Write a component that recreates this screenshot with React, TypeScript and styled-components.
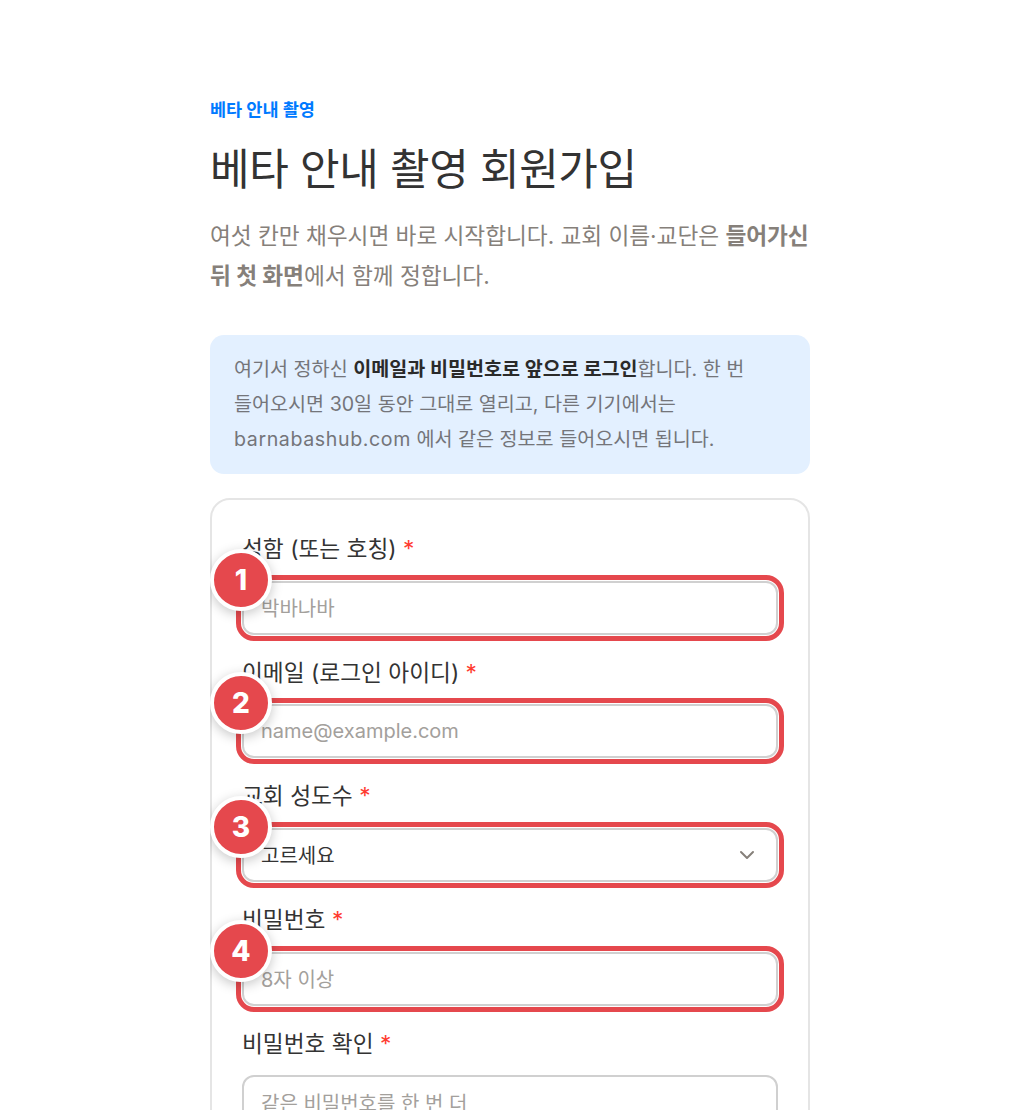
import React from "react";
import styled, { createGlobalStyle } from "styled-components";
import { ChevronDown } from "lucide-react";

const GlobalStyle = createGlobalStyle`
  html, body {
    margin: 0;
    padding: 0;
    height: 100%;
    overflow: hidden;
    background: #fff;
  }
  * {
    box-sizing: border-box;
  }
`;

const Page = styled.div`
  width: 600px;
  height: 1110px;
  overflow: hidden;
  margin: 0 auto;
  padding-top: 97px;
  font-family: Inter, "Noto Sans CJK KR", sans-serif;
  color: #333;
`;

const Eyebrow = styled.div`
  font-size: 17.5px;
  line-height: 26px;
  font-weight: 700;
  color: #007aff;
`;

const Title = styled.h1`
  margin: 20px 0 0;
  font-size: 43px;
  line-height: 52px;
  font-weight: 400;
  letter-spacing: -0.4px;
  color: #333;
`;

const Lead = styled.p`
  margin: 21px 0 0;
  font-size: 22.7px;
  line-height: 40px;
  letter-spacing: -0.05px;
  color: #86807a;
  word-break: keep-all;
  b {
    font-weight: 700;
  }
`;

const Notice = styled.div`
  margin-top: 39px;
  padding: 17px 24px 17px;
  background: #e3f0ff;
  border-radius: 14px;
  font-size: 19.6px;
  line-height: 35px;
  color: #74757a;
  word-break: keep-all;
  b {
    font-weight: 700;
    color: #2a2a2a;
  }
`;

const Domain = styled.span`
  letter-spacing: 0.6px;
`;

const Card = styled.div`
  margin-top: 24px;
  padding: 33px 30px 30px;
  border: 2px solid #e5e5e5;
  border-radius: 20px;
`;

const Field = styled.div`
  position: relative;
  margin-bottom: 22.2px;
`;

const Label = styled.label`
  display: block;
  font-size: 22.7px;
  line-height: 32px;
  color: #333;
  margin-bottom: 15.5px;
`;

const Required = styled.span`
  color: #ff3b30;
`;

const InputBox = styled.div`
  position: relative;
  height: 54px;
  padding: 0 17px;
  display: flex;
  align-items: center;
  justify-content: space-between;
  background: #fff;
  border: 2px solid #d0d0d0;
  border-radius: 12px;
  font-size: 20px;
`;

const Placeholder = styled.span`
  color: #a3a09c;
`;

const Value = styled.span`
  color: #333;
`;

const Chevron = styled(ChevronDown)`
  color: #86807a;
`;

const Ring = styled.div`
  position: absolute;
  inset: -8px;
  border: 5px solid #e5484d;
  border-radius: 18px;
  pointer-events: none;
`;

const Badge = styled.div`
  position: absolute;
  left: -31px;
  top: -31px;
  width: 62px;
  height: 62px;
  border-radius: 50%;
  border: 4px solid #fff;
  background: #e5484d;
  color: #fff;
  display: flex;
  align-items: center;
  justify-content: center;
  font-size: 28px;
  font-weight: 800;
  box-shadow: 0 3px 12px rgba(0, 0, 0, 0.22);
`;

type FieldRowProps = {
  label: string;
  placeholder?: string;
  value?: string;
  mark?: number;
  select?: boolean;
};

const FieldRow = ({ label, placeholder, value, mark, select }: FieldRowProps) => (
  <Field>
    <Label>
      {label} <Required>*</Required>
    </Label>
    <InputBox>
      {value ? <Value>{value}</Value> : <Placeholder>{placeholder}</Placeholder>}
      {select && <Chevron size={24} strokeWidth={2} />}
      {mark && (
        <Ring>
          <Badge>{mark}</Badge>
        </Ring>
      )}
    </InputBox>
  </Field>
);

const App = () => (
  <>
    <GlobalStyle />
    <Page>
      <Eyebrow>베타 안내 촬영</Eyebrow>
      <Title>베타 안내 촬영 회원가입</Title>
      <Lead>
        여섯 칸만 채우시면 바로 시작합니다. 교회 이름·교단은 <b>들어가신 뒤 첫 화면</b>에서 함께 정합니다.
      </Lead>
      <Notice>
        여기서 정하신 <b>이메일과 비밀번호로 앞으로 로그인</b>합니다. 한 번 들어오시면 30일 동안 그대로 열리고, 다른 기기에서는{" "}
        <Domain>barnabashub.com</Domain> 에서 같은 정보로 들어오시면 됩니다.
      </Notice>
      <Card>
        <FieldRow label="성함 (또는 호칭)" placeholder="박바나바" mark={1} />
        <FieldRow label="이메일 (로그인 아이디)" placeholder="name@example.com" mark={2} />
        <FieldRow label="교회 성도수" value="고르세요" mark={3} select />
        <FieldRow label="비밀번호" placeholder="8자 이상" mark={4} />
        <FieldRow label="비밀번호 확인" placeholder="같은 비밀번호를 한 번 더" />
      </Card>
    </Page>
  </>
);

export default App;
